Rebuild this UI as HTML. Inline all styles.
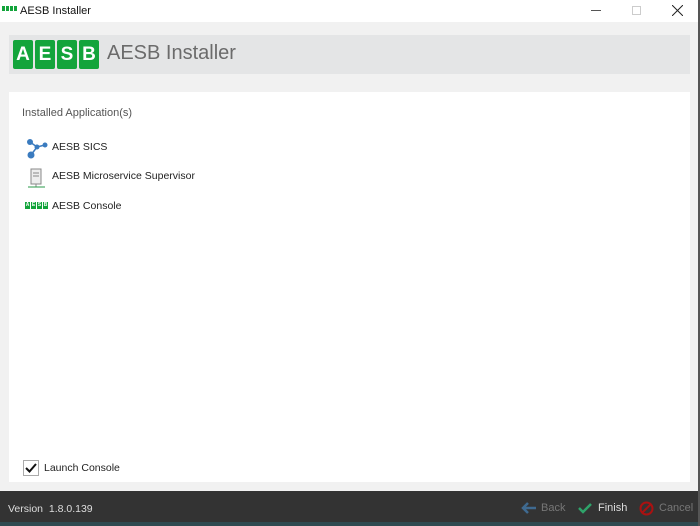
<!DOCTYPE html>
<html><head><meta charset="utf-8"><style>
*{margin:0;padding:0;box-sizing:border-box}
body{width:700px;height:526px;background:#f1f1f1;font-family:"Liberation Sans",sans-serif;position:relative;overflow:hidden;color:#222}
.tb{position:absolute;left:0;top:0;width:700px;height:22px;background:#fff}
.tb .t{position:absolute;left:20px;top:5px;font-size:11px;color:#111}
.rb{position:absolute;right:0;top:0;width:2px;height:526px;background:#555}
.hdr{position:absolute;left:9px;top:35px;width:681px;height:39px;background:#e4e5e6}
.lg{position:absolute;top:5px;width:20px;height:29px;background:#13a43b;border-radius:2px;color:#fff;font-weight:bold;font-size:19px;text-align:center;line-height:29px}
.hdr .h{position:absolute;left:98px;top:7px;font-size:20px;color:#6b6b6b}
.pn{position:absolute;left:9px;top:92px;width:681px;height:390px;background:#fff}
.pn .ti{position:absolute;left:13px;top:15px;font-size:11px;color:#555}
.it{position:absolute;left:43px;font-size:10.5px;color:#222}
.ft{position:absolute;left:0;top:491px;width:700px;height:31px;background:#333}
.ft2{position:absolute;left:0;top:522px;width:700px;height:4px;background:#2f4a50}
.ft span{position:absolute;top:11px;font-size:11px}
.ci{display:inline-block;width:5px;height:7px;background:#13a43b;margin-right:1px;color:#fff;font-size:5px;line-height:7px;text-align:center;font-weight:bold;vertical-align:top}
</style></head><body>
<div class="tb">
<div style="position:absolute;left:2px;top:6px;height:6px;line-height:0"><span class="ci" style="width:3px;height:5px;font-size:0"></span><span class="ci" style="width:3px;height:5px;font-size:0"></span><span class="ci" style="width:3px;height:5px;font-size:0"></span><span class="ci" style="width:3px;height:5px;font-size:0"></span></div>
<span class="t">AESB Installer</span>
<div style="position:absolute;left:591px;top:10px;width:10px;height:1px;background:#555"></div>
<div style="position:absolute;left:632px;top:6px;width:9px;height:9px;border:1px solid #ccc"></div>
<svg style="position:absolute;left:672px;top:5px" width="11" height="11"><path d="M0 0L11 11M11 0L0 11" stroke="#222" stroke-width="1"/></svg>
</div>
<div class="hdr">
<div class="lg" style="left:4px">A</div><div class="lg" style="left:26px">E</div><div class="lg" style="left:48px">S</div><div class="lg" style="left:70px">B</div>
<span class="h">AESB Installer</span>
</div>
<div class="pn">
<span class="ti">Installed Application(s)</span>
<svg style="position:absolute;left:16px;top:46px" width="24" height="22"><path d="M5 4L12 9L20 7M12 9L6 17" stroke="#3a7bbf" stroke-width="1.5" fill="none"/><circle cx="5" cy="4" r="3" fill="#3a7bbf"/><circle cx="12" cy="9" r="2.5" fill="#3a7bbf"/><circle cx="20" cy="7" r="2.5" fill="#3a7bbf"/><circle cx="6" cy="17" r="3.5" fill="#3a7bbf"/></svg>
<span class="it" style="top:49px">AESB SICS</span>
<svg style="position:absolute;left:18px;top:76px" width="20" height="22"><rect x="4" y="1" width="10" height="15" fill="#eee" stroke="#888"/><line x1="6" y1="5" x2="12" y2="5" stroke="#888"/><line x1="6" y1="8" x2="12" y2="8" stroke="#888"/><line x1="9" y1="16" x2="9" y2="19" stroke="#888"/><line x1="1" y1="19" x2="18" y2="19" stroke="#2a9a4a"/></svg>
<span class="it" style="top:78px">AESB Microservice Supervisor</span>
<div style="position:absolute;left:16px;top:110px;line-height:0"><span class="ci">A</span><span class="ci">E</span><span class="ci">S</span><span class="ci">B</span></div>
<span class="it" style="top:108px">AESB Console</span>
<div style="position:absolute;left:14px;top:368px;width:16px;height:16px;border:1px solid #aaa;background:#fff"></div>
<svg style="position:absolute;left:16px;top:371px" width="12" height="10"><path d="M1 5L4.5 8.5L11 1" stroke="#111" stroke-width="2" fill="none"/></svg>
<span class="it" style="left:35px;top:370px">Launch Console</span>
</div>
<div class="ft">
<span style="left:8px;top:12px;color:#ddd;font-size:10.5px">Version&nbsp; 1.8.0.139</span>
<svg style="position:absolute;left:521px;top:11px" width="16" height="12"><path d="M15 6H3M7 1L2 6L7 11" stroke="#3f6a90" stroke-width="2.5" fill="none"/></svg>
<span style="left:541px;color:#777">Back</span>
<svg style="position:absolute;left:578px;top:12px" width="14" height="11"><path d="M1 5L5 9L13 1" stroke="#2fa36a" stroke-width="2.5" fill="none"/></svg>
<span style="left:598px;color:#ddd">Finish</span>
<svg style="position:absolute;left:639px;top:10px" width="15" height="15"><circle cx="7.5" cy="7.5" r="6" stroke="#a11" stroke-width="2" fill="none"/><path d="M3.5 11.5L11.5 3.5" stroke="#a11" stroke-width="2"/></svg>
<span style="left:659px;color:#777">Cancel</span>
</div>
<div class="ft2"></div>
<div class="rb"></div>
</body></html>
